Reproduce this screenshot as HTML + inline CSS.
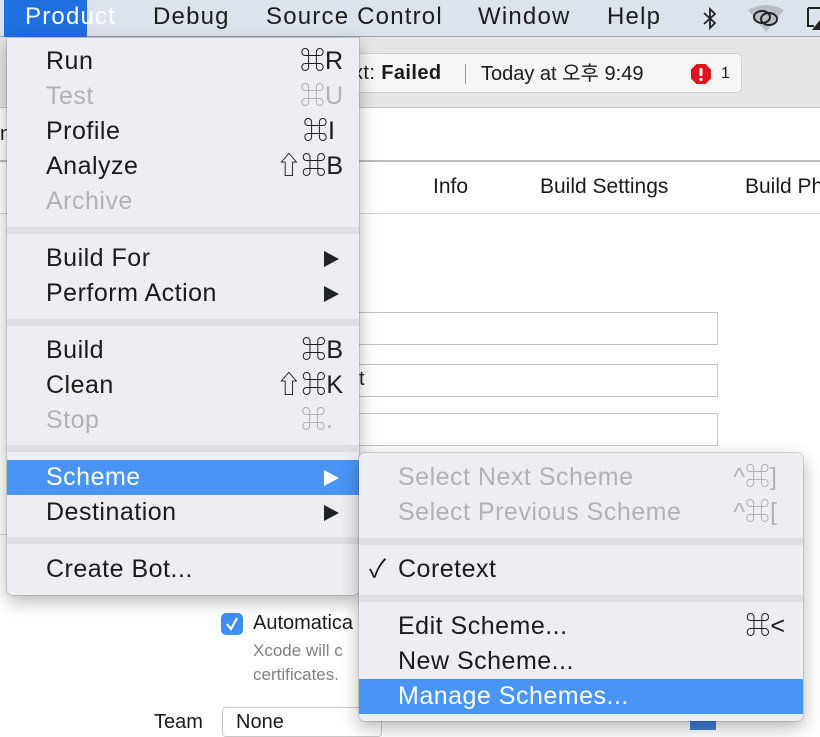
<!DOCTYPE html>
<html><head><meta charset="utf-8"><style>
*{margin:0;padding:0;box-sizing:border-box}
body{width:820px;height:727px;overflow:hidden;position:relative;background:#fff;font-family:"Liberation Sans","Noto Sans CJK KR",sans-serif;color:#1a1a1a;white-space:nowrap}
.abs{position:absolute}
.mb{left:0;top:0;width:820px;height:37px;background:#dde3ec;border-bottom:1px solid #9aa3ad}
.mb span{position:absolute;top:3px;font-size:24px;color:#1c1c1c;letter-spacing:1.2px}
.tb{left:0;top:37px;width:820px;height:71px;background:#e6e6e6;border-bottom:1px solid #c8c8c8}
.act{left:330px;top:53px;width:412px;height:40px;background:#f6f6f6;border:1px solid #d0d0d0;border-radius:5px;font-size:20px}
.menu{background:#eceef4;border-radius:0 0 6px 6px;box-shadow:0 6px 18px rgba(0,0,0,.3),0 0 0 1px rgba(0,0,0,.12)}
.it{position:absolute;left:0;right:0;height:35px;font-size:25px;line-height:35px;padding-left:39px;letter-spacing:0.5px}
.it .k{position:absolute;right:16px;top:0;letter-spacing:0}
.dis{color:#b0b2b6}
.sel{background:#4a94f6;color:#fff}
.sep{position:absolute;left:0;right:0;height:7px;background:#dcdee3}
.arr{position:absolute;right:20px;top:10px;width:0;height:0;border-left:15px solid #222;border-top:8px solid transparent;border-bottom:8px solid transparent}
.field{position:absolute;left:340px;width:378px;height:33px;border:1px solid #c4c4c4;background:#fff}
</style></head><body>
<div class="abs mb">
<div class="abs" style="left:4px;top:0;width:83px;height:37px;background:#1f6fe0"></div>
<span style="left:25px;color:#fff">Product</span>
<span style="left:153px">Debug</span>
<span style="left:266px">Source Control</span>
<span style="left:478px">Window</span>
<span style="left:607px">Help</span>
<svg class="abs" style="left:700px;top:6px" width="20" height="25" viewBox="0 0 20 25"><path d="M4 7 L15 17 L10 22 L10 3 L15 8 L4 18" fill="none" stroke="#222" stroke-width="1.8"/></svg>
<svg class="abs" style="left:746px;top:4px" width="40" height="28" viewBox="0 0 40 28"><path d="M2 6 Q20 -4 38 6 L20 28Z" fill="#b9bec6"/><ellipse cx="16" cy="13" rx="8" ry="6" fill="none" stroke="#222" stroke-width="2"/><ellipse cx="23" cy="15" rx="8" ry="6" fill="none" stroke="#222" stroke-width="2"/></svg>
<svg class="abs" style="left:806px;top:6px" width="14" height="26"><path d="M2 2 H14 M2 2 V20 H8" fill="none" stroke="#222" stroke-width="2"/><path d="M6 24 L14 14 V24Z" fill="#222"/></svg>
</div>
<div class="abs tb"></div>
<div class="abs act">
<span class="abs" style="left:22px;top:8px;letter-spacing:0.4px">xt: <b>Failed</b></span>
<div class="abs" style="left:134px;top:10px;width:1px;height:20px;background:#999"></div>
<span class="abs" style="left:150px;top:8px;line-height:24px">Today at 오후 9:49</span>
<svg class="abs" style="left:359px;top:9px" width="22" height="22" viewBox="0 0 22 22"><path d="M6.5 1 H15.5 L21 6.5 V15.5 L15.5 21 H6.5 L1 15.5 V6.5Z" fill="#e0141c"/><rect x="9.5" y="5" width="3" height="8" rx="1.3" fill="#fff"/><circle cx="11" cy="16.5" r="1.6" fill="#fff"/></svg>
<span class="abs" style="left:390px;top:11px;font-size:16px">1</span>
</div>
<div class="abs" style="left:0;top:160px;width:820px;height:2px;background:#bdbdbd"></div>
<div class="abs" style="left:0;top:213px;width:820px;height:1px;background:#d4d4d4"></div>
<div class="abs" style="left:0;top:534px;width:360px;height:1px;background:#d4d4d4"></div>
<span class="abs" style="left:0;top:123px;font-size:20px">n</span>
<span class="abs" style="left:433px;top:175px;font-size:21px">Info</span>
<span class="abs" style="left:540px;top:175px;font-size:21px">Build Settings</span>
<span class="abs" style="left:745px;top:175px;font-size:21px">Build Ph</span>
<div class="field" style="top:312px"></div>
<div class="field" style="top:364px"><span class="abs" style="left:18px;top:3px;font-size:20px">t</span></div>
<div class="field" style="top:413px"></div>
<div class="abs" style="left:221px;top:613px;width:22px;height:22px;border-radius:5px;background:#3d8ff5"><svg width="22" height="22"><path d="M6 11 L10 16 L16 5" fill="none" stroke="#fff" stroke-width="2.2"/></svg></div>
<span class="abs" style="left:253px;top:612px;font-size:20px">Automatica</span>
<span class="abs" style="left:253px;top:641px;font-size:17px;color:#808080">Xcode will c</span>
<span class="abs" style="left:253px;top:665px;font-size:17px;color:#808080">certificates.</span>
<span class="abs" style="left:154px;top:711px;font-size:20px">Team</span>
<div class="abs" style="left:222px;top:707px;width:160px;height:30px;border:1px solid #c8c8c8;border-radius:4px;background:#fff"><span class="abs" style="left:13px;top:3px;font-size:20px">None</span></div>
<div class="abs" style="left:690px;top:720px;width:26px;height:10px;background:#3d7fd8"></div>

<div class="abs menu" style="left:7px;top:38px;width:352px;height:557px">
<div class="it" style="top:6px">Run<span class="k">⌘R</span></div>
<div class="it dis" style="top:41px">Test<span class="k">⌘U</span></div>
<div class="it" style="top:76px">Profile<span class="k" style="right:24px">⌘I</span></div>
<div class="it" style="top:111px">Analyze<span class="k">⇧⌘B</span></div>
<div class="it dis" style="top:146px">Archive</div>
<div class="sep" style="top:189px"></div>
<div class="it" style="top:203px">Build For<span class="arr"></span></div>
<div class="it" style="top:238px">Perform Action<span class="arr"></span></div>
<div class="sep" style="top:281px"></div>
<div class="it" style="top:295px">Build<span class="k">⌘B</span></div>
<div class="it" style="top:330px">Clean<span class="k">⇧⌘K</span></div>
<div class="it dis" style="top:365px">Stop<span class="k" style="right:26px">⌘.</span></div>
<div class="sep" style="top:407px"></div>
<div class="it sel" style="top:422px">Scheme<span class="arr" style="border-left-color:#fff"></span></div>
<div class="it" style="top:457px">Destination<span class="arr"></span></div>
<div class="sep" style="top:499px"></div>
<div class="it" style="top:514px">Create Bot...</div>
</div>

<div class="abs menu" style="left:359px;top:453px;width:444px;height:268px;border-radius:6px">
<div class="it dis" style="top:7px">Select Next Scheme<span class="k" style="right:26px">^⌘]</span></div>
<div class="it dis" style="top:42px">Select Previous Scheme<span class="k" style="right:26px">^⌘[</span></div>
<div class="sep" style="top:85px"></div>
<div class="it" style="top:99px"><span class="abs" style="left:10px">✓</span>Coretext</div>
<div class="sep" style="top:142px"></div>
<div class="it" style="top:156px">Edit Scheme...<span class="k" style="right:18px">⌘&lt;</span></div>
<div class="it" style="top:191px">New Scheme...</div>
<div class="it sel" style="top:226px">Manage Schemes...</div>
</div>
</body></html>
